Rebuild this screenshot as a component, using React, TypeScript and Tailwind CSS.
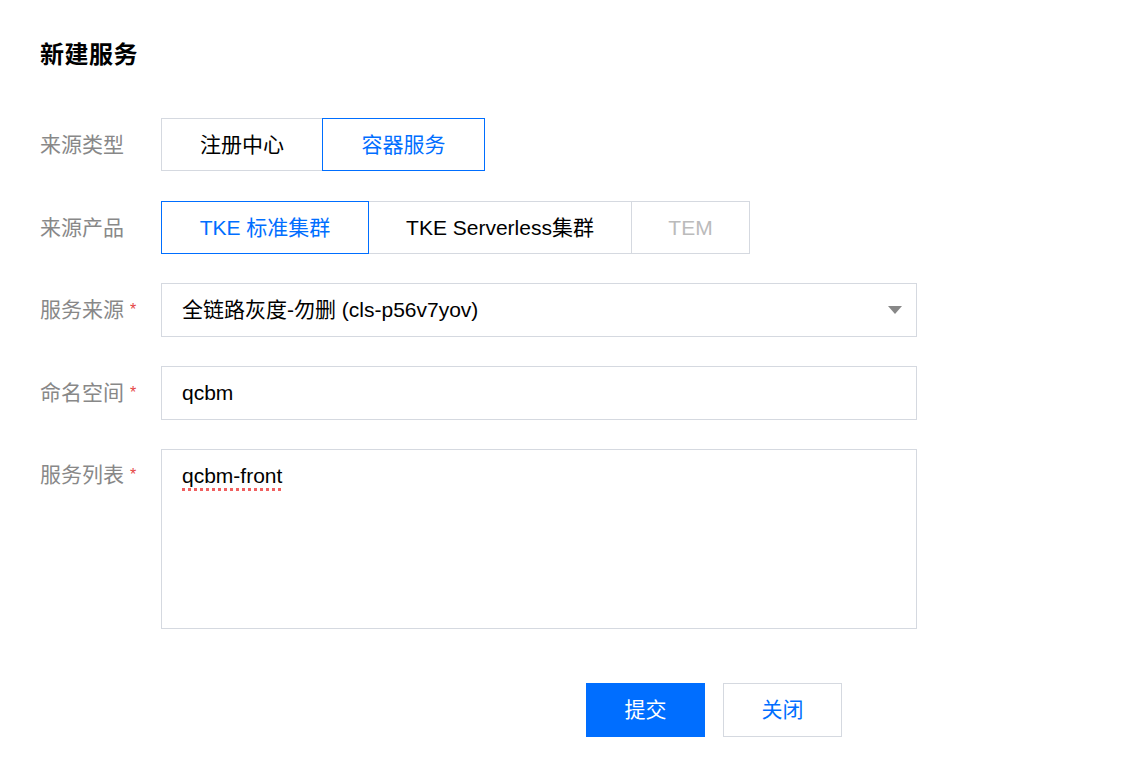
import React from "react";

const font = { fontFamily: '"Liberation Sans", "Noto Sans CJK SC", sans-serif' };

function Label({ text, required }: { text: string; required?: boolean }) {
  return (
    <div className="w-[121px] shrink-0 text-[21px] text-[#888888] flex items-center">
      <span>{text}</span>
      {required && <span className="ml-[6px] text-[16px] text-[#e54545]">*</span>}
    </div>
  );
}

function Segment({ items, active, widths }: { items: string[]; active: number; widths: string[] }) {
  return (
    <div className="flex">
      {items.map((item, i) => {
        const isActive = i === active;
        const disabled = item === "TEM";
        return (
          <div
            key={item}
            className={`${widths[i]} h-[53px] flex items-center justify-center text-[21px] border ${
              i > 0 ? "-ml-px" : ""
            } ${
              isActive
                ? "border-[#006eff] text-[#006eff] relative z-10"
                : disabled
                ? "border-[#d5d9e0] text-[#bbbbbb]"
                : "border-[#d5d9e0] text-black"
            }`}
          >
            {item}
          </div>
        );
      })}
    </div>
  );
}

export default function App() {
  return (
    <div className="min-h-[764px] bg-white px-[40px] pt-[40px]" style={font}>
      <h1 className="text-[24px] font-bold text-black leading-[30px] tracking-[0.5px]">新建服务</h1>

      <div className="mt-[48px] flex flex-col gap-[30px]">
        <div className="flex items-center">
          <Label text="来源类型" />
          <Segment items={["注册中心", "容器服务"]} active={1} widths={["w-[162px]", "w-[163px]"]} />
        </div>

        <div className="flex items-center">
          <Label text="来源产品" />
          <Segment
            items={["TKE 标准集群", "TKE Serverless集群", "TEM"]}
            active={0}
            widths={["w-[208px]", "w-[264px]", "w-[119px]"]}
          />
        </div>

        <div className="flex items-center -mt-px">
          <Label text="服务来源" required />
          <div className="w-[756px] h-[54px] border border-[#d5d9e0] flex items-center justify-between pl-[20px] pr-[14px] text-[21px] text-black">
            <span>全链路灰度-勿删 (cls-p56v7yov)</span>
            <svg width="14" height="8" viewBox="0 0 14 8">
              <path d="M0 0 L14 0 L7 8 Z" fill="#888888" />
            </svg>
          </div>
        </div>

        <div className="flex items-center -mt-px">
          <Label text="命名空间" required />
          <div className="w-[756px] h-[54px] border border-[#d5d9e0] flex items-center pl-[20px] text-[21px] text-black">
            qcbm
          </div>
        </div>

        <div className="flex items-start -mt-px">
          <div className="pt-[10px]">
            <Label text="服务列表" required />
          </div>
          <div className="w-[756px] h-[180px] border border-[#d5d9e0] pl-[20px] pt-[10px] text-[21px] text-black">
            <span className="underline decoration-dotted decoration-[#f06060] decoration-[3px] underline-offset-[5px]">
              qcbm-front
            </span>
          </div>
        </div>
      </div>

      <div className="mt-[54px] flex gap-[18px] pl-[546px]">
        <button className="w-[119px] h-[54px] bg-[#006eff] text-white text-[21px]">提交</button>
        <button className="w-[119px] h-[54px] border border-[#d5d9e0] bg-white text-[#006eff] text-[21px]">
          关闭
        </button>
      </div>
    </div>
  );
}
